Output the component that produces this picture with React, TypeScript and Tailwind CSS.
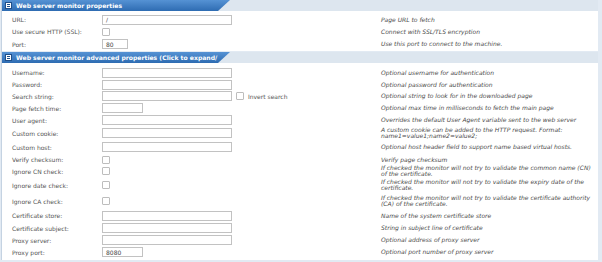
import React from "react";

type Field =
  | { kind: "text"; w: number; value?: string }
  | { kind: "check" }
  | { kind: "search" };

type Row = { label: string; field: Field; desc: string[]; h: string };

const basic: Row[] = [
  { label: "URL:", field: { kind: "text", w: 130, value: "/" }, desc: ["Page URL to fetch"], h: "h-[13px]" },
  { label: "Use secure HTTP (SSL):", field: { kind: "check" }, desc: ["Connect with SSL/TLS encryption"], h: "h-[11px]" },
  { label: "Port:", field: { kind: "text", w: 26, value: "80" }, desc: ["Use this port to connect to the machine."], h: "h-[14px]" },
];

const advanced: Row[] = [
  { label: "Username:", field: { kind: "text", w: 130 }, desc: ["Optional username for authentication"], h: "h-[13px]" },
  { label: "Password:", field: { kind: "text", w: 130 }, desc: ["Optional password for authentication"], h: "h-[11px]" },
  { label: "Search string:", field: { kind: "search" }, desc: ["Optional string to look for in the downloaded page"], h: "h-[12px]" },
  { label: "Page fetch time:", field: { kind: "text", w: 41 }, desc: ["Optional max time in milliseconds to fetch the main page"], h: "h-[12px]" },
  { label: "User agent:", field: { kind: "text", w: 130 }, desc: ["Overrides the default User Agent variable sent to the web server"], h: "h-[12px]" },
  {
    label: "Custom cookie:",
    field: { kind: "text", w: 130 },
    desc: ["A custom cookie can be added to the HTTP request. Format:", "name1=value1;name2=value2;"],
    h: "h-[14px]",
  },
  { label: "Custom host:", field: { kind: "text", w: 130 }, desc: ["Optional host header field to support name based virtual hosts."], h: "h-[14px]" },
  { label: "Verify checksum:", field: { kind: "check" }, desc: ["Verify page checksum"], h: "h-[11px]" },
  {
    label: "Ignore CN check:",
    field: { kind: "check" },
    desc: ["If checked the monitor will not try to validate the common name (CN)", "of the certificate."],
    h: "h-[12px]",
  },
  {
    label: "Ignore date check:",
    field: { kind: "check" },
    desc: ["If checked the monitor will not try to validate the expiry date of the", "certificate."],
    h: "h-[16px]",
  },
  {
    label: "Ignore CA check:",
    field: { kind: "check" },
    desc: ["If checked the monitor will not try to validate the certificate authority", "(CA) of the certificate."],
    h: "h-[16px]",
  },
  { label: "Certificate store:", field: { kind: "text", w: 130 }, desc: ["Name of the system certificate store"], h: "h-[13px]" },
  { label: "Certificate subject:", field: { kind: "text", w: 130 }, desc: ["String in subject line of certificate"], h: "h-[12px]" },
  { label: "Proxy server:", field: { kind: "text", w: 130 }, desc: ["Optional address of proxy server"], h: "h-[12px]" },
  { label: "Proxy port:", field: { kind: "text", w: 41, value: "8080" }, desc: ["Optional port number of proxy server"], h: "h-[12px]" },
];

function Check() {
  return <span className="block w-[8px] h-[8px] border border-[#bdbdbd] rounded-[1px] bg-white" />;
}

function Input({ w, value }: { w: number; value?: string }) {
  return (
    <span
      className="flex items-center h-[10px] border border-[#c2c2c2] bg-white px-[3px] text-[6px] text-[#444]"
      style={{ width: w }}
    >
      {value}
    </span>
  );
}

function FieldCell({ field }: { field: Field }) {
  if (field.kind === "check") return <Check />;
  if (field.kind === "search")
    return (
      <div className="flex items-center gap-[4px]">
        <Input w={130} />
        <Check />
        <span className="text-[6px] text-[#555]">Invert search</span>
      </div>
    );
  return <Input w={field.w} value={field.value} />;
}

function Header({ title }: { title: string }) {
  return (
    <div className="flex h-[11px] bg-[#dde6ef]">
      <div className="flex items-center gap-[4px] pl-[3px] w-[228px] overflow-hidden bg-gradient-to-b from-[#5592d4] to-[#2e6cb2] [clip-path:polygon(0_0,100%_0,calc(100%-12px)_100%,0_100%)]">
        <span className="flex flex-col justify-center gap-[1px] w-[7px] h-[7px] shrink-0 bg-white border border-[#1f4f8a] px-[1px]">
          <span className="block h-[1px] bg-[#1f4f8a]" />
          <span className="block h-[1px] bg-[#1f4f8a]" />
        </span>
        <span className="text-[6.1px] font-bold text-white whitespace-nowrap">{title}</span>
      </div>
    </div>
  );
}

function Panel({ title, rows, pad, bottom }: { title: string; rows: Row[]; pad: string; bottom: string }) {
  return (
    <div className="flex flex-col">
      <Header title={title} />
      <div className={`bg-white ${pad} ${bottom}`}>
        {rows.map((r) => (
          <div key={r.label} className={`flex items-center ${r.h}`}>
            <div className="w-[100px] pl-[10px] text-[6px] text-[#555] whitespace-nowrap">{r.label}</div>
            <div className="w-[279px]">
              <FieldCell field={r.field} />
            </div>
            <div className="flex-1 text-[6px] italic text-[#4a4a4a] leading-[6px] whitespace-nowrap">
              {r.desc.map((d) => (
                <div key={d}>{d}</div>
              ))}
            </div>
          </div>
        ))}
      </div>
    </div>
  );
}

export default function App() {
  return (
    <div className="w-[602px] h-[262px] overflow-hidden bg-[#e2eaf3] pl-[1px] pr-[4px] font-['DejaVu_Sans',sans-serif]">
      <div className="flex flex-col gap-[1px] border-l border-[#c5d3e2]">
        <Panel title="Web server monitor properties" rows={basic} pad="pt-[2px]" bottom="h-[40px]" />
        <Panel
          title="Web server monitor advanced properties (Click to expand/"
          rows={advanced}
          pad="pt-[3px]"
          bottom="h-[197px]"
        />
      </div>
    </div>
  );
}
